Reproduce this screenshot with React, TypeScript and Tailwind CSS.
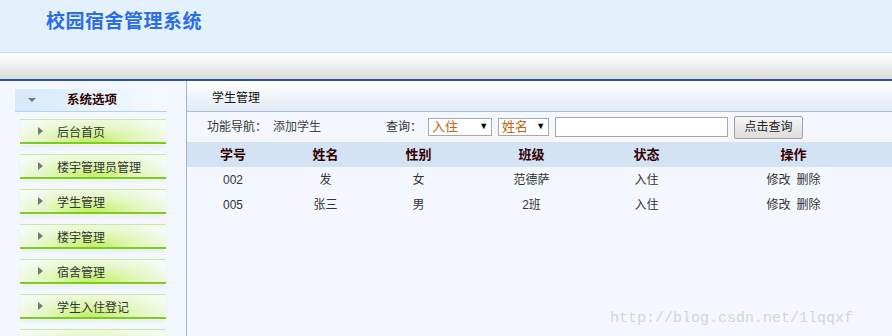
const menu = ["后台首页", "楼宇管理员管理", "学生管理", "楼宇管理", "宿舍管理", "学生入住登记", ""];

const rows = [
  { no: "002", name: "发", sex: "女", cls: "范德萨", state: "入住" },
  { no: "005", name: "张三", sex: "男", cls: "2班", state: "入住" },
];

const cols = "grid grid-cols-[92px_93px_93px_133px_97px_1fr]";

function MenuItem({ label }: { label: string }) {
  return (
    <div className="ml-[20px] w-[146px] h-[35px] shrink-0">
      <div className="h-[25px] border-t border-[#c6ec96] border-b-2 border-b-[#7acb24] bg-[radial-gradient(ellipse_at_50%_100%,#c0f060_0%,#e2f7bc_45%,#f6faf4_85%)] flex items-center shadow-[0_1px_0_#ffffff,0_3px_3px_#e8eef4]">
        {label && (
          <>
            <span className="ml-[18px] w-0 h-0 border-y-[4px] border-y-transparent border-l-[5px] border-l-[#777777]" />
            <span className="ml-[14px] text-[12px] text-[#333333] pt-[4px]">{label}</span>
          </>
        )}
      </div>
    </div>
  );
}

export default function App() {
  return (
    <div className="w-[892px] h-[336px] overflow-hidden flex flex-col bg-[#f4f8fe] font-['Liberation_Sans','Noto_Sans_CJK_SC',sans-serif] relative">
      <div className="h-[53px] shrink-0 bg-[#e3f1fd] border-b border-[#d4dce6] flex items-center pl-[46px] pb-[7px]">
        <h1 className="text-[19px] font-bold text-[#2b6ce8] tracking-[0.5px]">校园宿舍管理系统</h1>
      </div>
      <div className="h-[28px] shrink-0 bg-gradient-to-b from-[#ffffff] to-[#dcdde0] border-b-2 border-[#2d5594]" />
      <div className="flex flex-1 min-h-0">
        <aside className="w-[187px] shrink-0 border-r border-[#9cb4d0] flex flex-col pt-[8px]">
          <div className="ml-[15px] w-[152px] h-[23px] shrink-0 bg-gradient-to-r from-[#d6e9fa] via-[#e6f2fc] to-[#f6fafe] border-b border-[#b3d1ee] flex items-center">
            <span className="ml-[13px] w-0 h-0 border-x-[4px] border-x-transparent border-t-[4px] border-t-[#777777]" />
            <span className="ml-[31px] text-[12.5px] font-bold text-[#330000]">系统选项</span>
          </div>
          <div className="h-[7px] shrink-0" />
          {menu.map((m, i) => (
            <MenuItem key={i} label={m} />
          ))}
        </aside>
        <main className="flex-1 flex flex-col">
          <div className="h-[31px] shrink-0 bg-gradient-to-b from-[#ffffff] to-[#e3ebf5] border-b border-[#a9bfd8] flex items-center pl-[25px] pt-[3px] text-[12px] text-[#111111]">
            学生管理
          </div>
          <div className="h-[30px] shrink-0 flex items-center text-[12px] text-[#333333]">
            <span className="ml-[20px]">功能导航：</span>
            <span className="ml-[6px] text-[#444444]">添加学生</span>
            <span className="ml-[65px]">查询：</span>
            <div className="ml-[6px] w-[64px] h-[18px] border border-[#a8a8a8] bg-white flex items-center justify-between px-[3px] text-[13px] text-[#c0640a]">
              <span>入住</span>
              <span className="text-[9px] text-black">▼</span>
            </div>
            <div className="ml-[6px] w-[51px] h-[18px] border border-[#a8a8a8] bg-white flex items-center justify-between px-[3px] text-[13px] text-[#c0640a]">
              <span>姓名</span>
              <span className="text-[9px] text-black">▼</span>
            </div>
            <input className="ml-[6px] w-[173px] h-[20px] border border-[#a8a8a8] bg-white outline-none" />
            <button className="ml-[6px] w-[69px] h-[23px] border border-[#a0a0a0] rounded-[2px] bg-gradient-to-b from-[#f6f6f6] to-[#dcdcdc] text-[12px] text-[#222222]">
              点击查询
            </button>
          </div>
          <div className={`${cols} h-[25px] shrink-0 bg-[#d3e3f4] items-center text-center text-[13px] font-bold text-[#330000]`}>
            <span>学号</span>
            <span>姓名</span>
            <span>性别</span>
            <span>班级</span>
            <span>状态</span>
            <span>操作</span>
          </div>
          {rows.map((r) => (
            <div key={r.no} className={`${cols} h-[25px] shrink-0 items-center text-center text-[12px] text-[#333333]`}>
              <span>{r.no}</span>
              <span>{r.name}</span>
              <span>{r.sex}</span>
              <span>{r.cls}</span>
              <span>{r.state}</span>
              <span className="flex justify-center gap-[6px]">
                <span>修改</span>
                <span>删除</span>
              </span>
            </div>
          ))}
        </main>
      </div>
      <div className="absolute left-[610px] top-[308px] text-[15px] text-[#d6d6d6] font-['Liberation_Mono',monospace]">
        http://blog.csdn.net/1lqqxf
      </div>
    </div>
  );
}
